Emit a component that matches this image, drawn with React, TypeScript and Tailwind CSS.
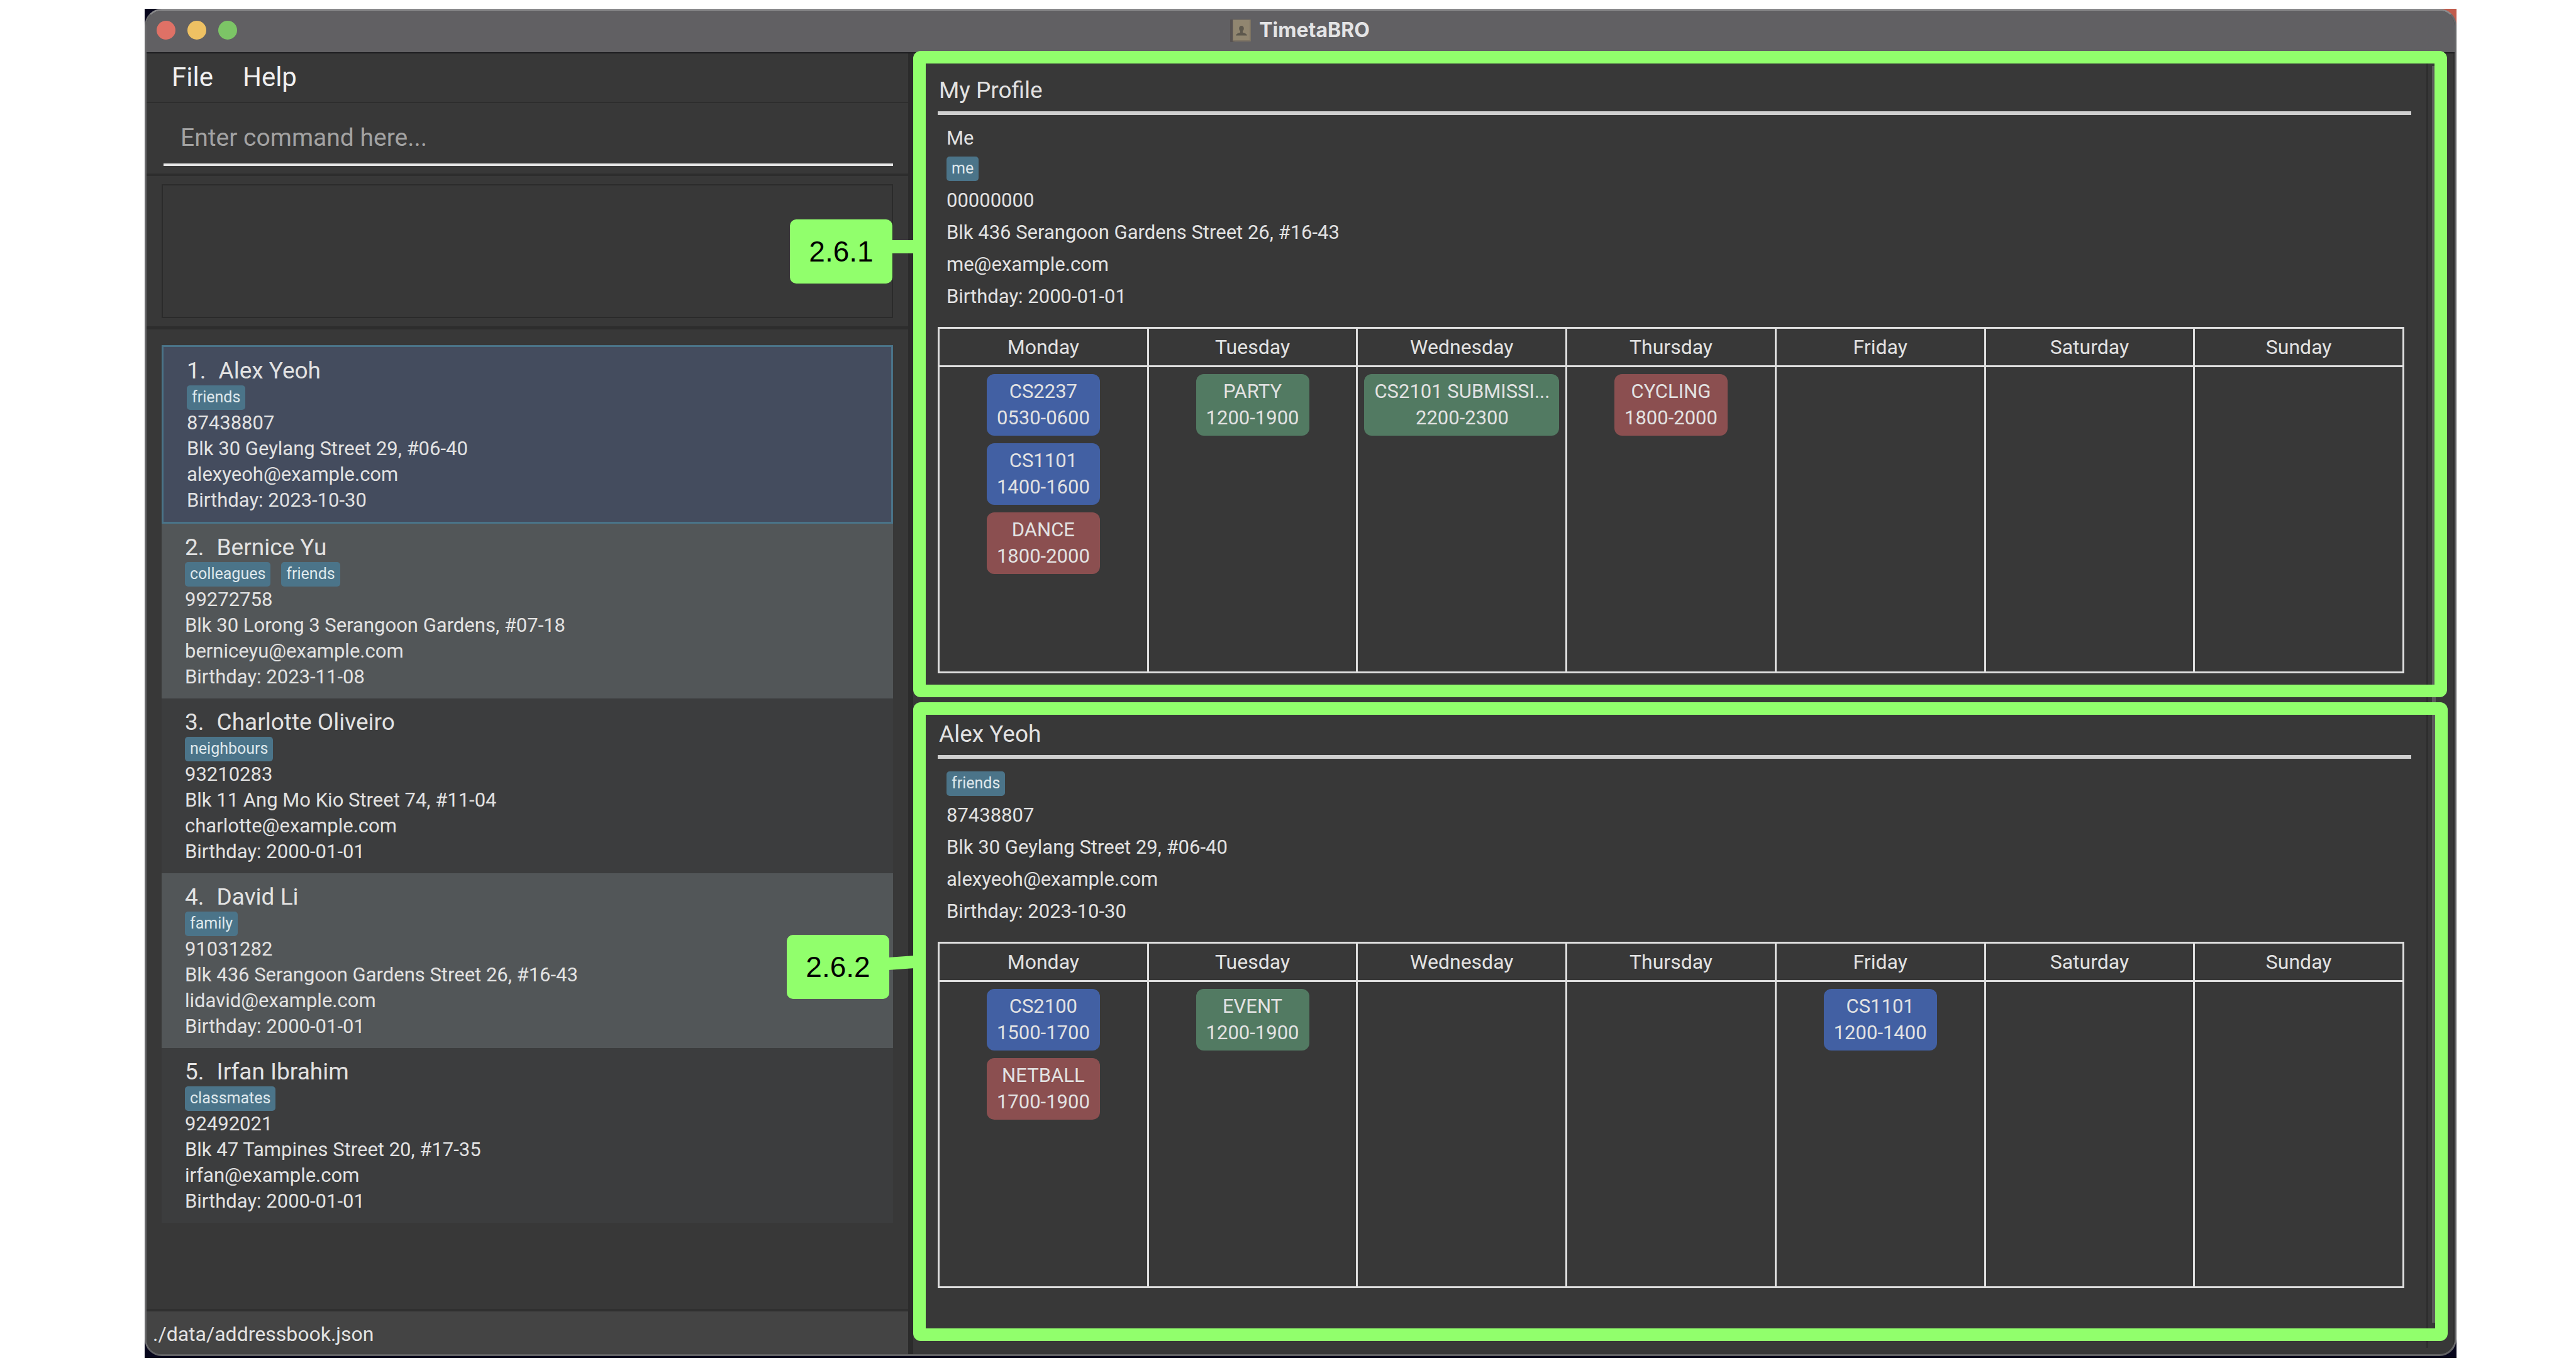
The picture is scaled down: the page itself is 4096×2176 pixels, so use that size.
type Person = {
  name: string;
  tags: string[];
  phone: string;
  address: string;
  email: string;
  birthday: string;
};

type Kind = "module" | "dated" | "cca";

type Slot = { label: string; time: string; kind: Kind; wide?: boolean };

const DAYS = ["Monday", "Tuesday", "Wednesday", "Thursday", "Friday", "Saturday", "Sunday"];

const PEOPLE: Person[] = [
  {
    name: "Alex Yeoh",
    tags: ["friends"],
    phone: "87438807",
    address: "Blk 30 Geylang Street 29, #06-40",
    email: "alexyeoh@example.com",
    birthday: "2023-10-30",
  },
  {
    name: "Bernice Yu",
    tags: ["colleagues", "friends"],
    phone: "99272758",
    address: "Blk 30 Lorong 3 Serangoon Gardens, #07-18",
    email: "berniceyu@example.com",
    birthday: "2023-11-08",
  },
  {
    name: "Charlotte Oliveiro",
    tags: ["neighbours"],
    phone: "93210283",
    address: "Blk 11 Ang Mo Kio Street 74, #11-04",
    email: "charlotte@example.com",
    birthday: "2000-01-01",
  },
  {
    name: "David Li",
    tags: ["family"],
    phone: "91031282",
    address: "Blk 436 Serangoon Gardens Street 26, #16-43",
    email: "lidavid@example.com",
    birthday: "2000-01-01",
  },
  {
    name: "Irfan Ibrahim",
    tags: ["classmates"],
    phone: "92492021",
    address: "Blk 47 Tampines Street 20, #17-35",
    email: "irfan@example.com",
    birthday: "2000-01-01",
  },
];

const ME: Person = {
  name: "Me",
  tags: ["me"],
  phone: "00000000",
  address: "Blk 436 Serangoon Gardens Street 26, #16-43",
  email: "me@example.com",
  birthday: "2000-01-01",
};

const MY_WEEK: Slot[][] = [
  [
    { label: "CS2237", time: "0530-0600", kind: "module" },
    { label: "CS1101", time: "1400-1600", kind: "module" },
    { label: "DANCE", time: "1800-2000", kind: "cca" },
  ],
  [{ label: "PARTY", time: "1200-1900", kind: "dated" }],
  [{ label: "CS2101 SUBMISSI...", time: "2200-2300", kind: "dated", wide: true }],
  [{ label: "CYCLING", time: "1800-2000", kind: "cca" }],
  [],
  [],
  [],
];

const ALEX_WEEK: Slot[][] = [
  [
    { label: "CS2100", time: "1500-1700", kind: "module" },
    { label: "NETBALL", time: "1700-1900", kind: "cca" },
  ],
  [{ label: "EVENT", time: "1200-1900", kind: "dated" }],
  [],
  [],
  [{ label: "CS1101", time: "1200-1400", kind: "module" }],
  [],
  [],
];

const KIND_COLOR: Record<Kind, string> = {
  module: "bg-[#4260a3]",
  dated: "bg-[#527a62]",
  cca: "bg-[#8b4f50]",
};

function Tag({ text }: { text: string }) {
  return (
    <span className="h-[39px] rounded-[5px] bg-[#4b7489] px-2 text-[25px] leading-[38px] text-[#dfe8ec]">
      {text}
    </span>
  );
}

function BookIcon() {
  return (
    <svg viewBox="0 0 33 37" className="h-[37px] w-[33px]" aria-hidden="true">
      <rect x="0" y="1" width="7" height="36" rx="1" fill="#575252" />
      <rect x="4" y="1" width="29" height="35" rx="1" fill="#7d7363" />
      <rect x="5" y="2" width="26" height="32" fill="#918670" />
      <path
        d="M18 11c2.400 0 3.800 1.800 3.800 4.200 0 1.800-.8 3.300-1.800 4.300v2.300c3 .9 6 1.700 7 4.700H9c1-3 4-3.800 7-4.700v-2.300c-1-1-1.800-2.500-1.800-4.300 0-2.400 1.400-4.200 3.800-4.200z"
        fill="#5d584d"
      />
    </svg>
  );
}

function TitleBar() {
  return (
    <header className="flex h-[68px] items-center border-b-2 border-[#1d1d20] bg-[#616063] pb-1">
      <div className="flex flex-1 gap-[19px] pl-4">
        <button aria-label="Close" className="size-[30px] rounded-full bg-[#df7166]" />
        <button aria-label="Minimise" className="size-[30px] rounded-full bg-[#eec163]" />
        <button aria-label="Zoom" className="size-[30px] rounded-full bg-[#7cc566]" />
      </div>
      <div className="flex items-center gap-[13px] pr-[18px]">
        <BookIcon />
        <h1 className="font-['Inter',sans-serif] text-[32px] leading-[38px] font-bold text-[#e4e4e5]">TimetaBRO</h1>
      </div>
      <div className="flex-1" />
    </header>
  );
}

function PersonCard({ person, index }: { person: Person; index: number }) {
  const tone =
    index === 0
      ? "border-[3px] border-[#4a7388] bg-[#444c5e]"
      : index % 2 === 1
        ? "bg-[#525658]"
        : "bg-[#3c3d3e]";
  return (
    <li className={`${tone} pt-[14px] pb-[14px] pl-[37px]`}>
      <h2 className="flex gap-5 text-[37px] leading-[47px]">
        <span>{index + 1}.</span>
        <span>{person.name}</span>
      </h2>
      <div className="flex gap-[17px]">
        {person.tags.map((t) => (
          <Tag key={t} text={t} />
        ))}
      </div>
      <div className="text-[31px] leading-[41px]">
        <p>{person.phone}</p>
        <p>{person.address}</p>
        <p>{person.email}</p>
        <p>Birthday: {person.birthday}</p>
      </div>
    </li>
  );
}

function LeftPane() {
  return (
    <div className="flex min-w-0 flex-col">
      <nav className="flex h-[79px] items-center gap-[47px] border-b-2 border-[#2d2d2d] pb-[2px] pl-10 text-[42px] leading-[50px] text-[#f0f0f0]">
        <button>File</button>
        <button>Help</button>
      </nav>
      <div className="border-b-4 border-[#2d2d2d] pt-[14px] pr-6 pb-3 pl-[27px]">
        <input
          type="text"
          aria-label="Command"
          placeholder="Enter command here..."
          className="block h-[86px] w-full border-b-4 border-[#e6e6e6] bg-transparent pl-[27px] text-[39px] text-white outline-none placeholder:text-[#a3a3a3]"
        />
      </div>
      <div className="border-b-[5px] border-[#2d2d2d] py-[13px] pr-6 pl-6">
        <textarea
          readOnly
          aria-label="Result"
          className="block h-[213px] w-full resize-none border-2 border-[#2b2b2b] bg-transparent outline-none"
        />
      </div>
      <ul className="grow pt-[25px] pr-6 pl-6">
        {PEOPLE.map((p, i) => (
          <PersonCard key={p.name} person={p} index={i} />
        ))}
      </ul>
      <footer className="flex h-[72px] items-center border-t-4 border-[#303030] bg-[#444444] pt-1 pl-[10px] text-[32px] leading-[40px]">
        ./data/addressbook.json
      </footer>
    </div>
  );
}

function Timetable({ week }: { week: Slot[][] }) {
  return (
    <div className="mt-[23px] pr-[11px]">
      <table className="w-full table-fixed border-collapse">
        <thead>
          <tr className="h-[61px]">
            {DAYS.map((d) => (
              <th key={d} className="border-[3px] border-[#dedede] p-0 text-[32px] leading-[40px] font-normal">
                {d}
              </th>
            ))}
          </tr>
        </thead>
        <tbody>
          <tr className="h-[487px]">
            {week.map((slots, i) => (
              <td key={DAYS[i]} className="border-[3px] border-[#dedede] px-[10px] pt-[11px] align-top">
                <div className="flex flex-col items-center gap-3">
                  {slots.map((s) => (
                    <div
                      key={s.label}
                      className={`${KIND_COLOR[s.kind]} ${s.wide ? "w-full" : ""} flex rounded-xl px-4 py-[7px] text-[31px] leading-[42px]`}
                    >
                      <p className="text-center whitespace-nowrap">
                        {s.label}
                        <br />
                        {s.time}
                      </p>
                    </div>
                  ))}
                </div>
              </td>
            ))}
          </tr>
        </tbody>
      </table>
    </div>
  );
}

function Profile({ title, person, week, showName }: { title: string; person: Person; week: Slot[][]; showName?: boolean }) {
  return (
    <div className="pt-[35px] pr-6 pl-[39px]">
      <h2 className="border-b-[6px] border-[#cfcfcf] pb-[9px] pl-[2px] text-[37px] leading-[48px]">{title}</h2>
      <div className="pt-[14px] pl-[14px] text-[31px] leading-[51px]">
        {showName && <p className="leading-[46px]">{person.name}</p>}
        <div className="mt-[6px] mb-[5px] flex">
          {person.tags.map((t) => (
            <Tag key={t} text={t} />
          ))}
        </div>
        <p>{person.phone}</p>
        <p>{person.address}</p>
        <p>{person.email}</p>
        <p>Birthday: {person.birthday}</p>
      </div>
      <Timetable week={week} />
    </div>
  );
}

const BADGE =
  "absolute flex h-[102px] w-[163px] items-center justify-center rounded-[10px] bg-[#91ff6c] font-['Liberation_Sans',Arial,sans-serif] text-[46px] leading-[52px] text-black";

export default function App() {
  return (
    <div className="flex min-h-screen bg-white pt-[14px] pr-[190px] pb-4 pl-[230px] font-['Roboto',sans-serif] text-[#e2e2e2]">
      <div className="relative flex min-w-0 grow bg-[#07061c] pb-[3px]">
        <div className="absolute top-0 right-0 size-7 bg-[#c05c4c]" />
        <div className="relative flex min-w-0 grow flex-col overflow-hidden rounded-[27px] border-[3px] border-t-[#8a8a8c] border-r-[#69696b] border-b-[#626264] border-l-[#69696b] bg-[#383838]">
          <TitleBar />
          <main className="grid grow grid-cols-[1211fr_8px_2451fr]">
            <LeftPane />
            <div className="bg-[#2b2b2b]" />
            <div className="flex min-w-0">
              <div className="flex min-w-0 grow flex-col">
                <section className="relative z-10 h-[1024px]">
                  <Profile title="My Profile" person={ME} week={MY_WEEK} showName />
                  <div className="pointer-events-none absolute -top-1 -right-[33px] bottom-0 left-0">
                    <div className="absolute inset-0 rounded-xl border-[20px] border-[#91ff6c]" />
                    <div className="absolute top-[301px] -left-[34px] h-[21px] w-[36px] bg-[#91ff6c]" />
                    <div className={`${BADGE} top-[268px] -left-[196px]`}>2.6.1</div>
                  </div>
                </section>
                <section className="relative z-10 grow">
                  <Profile title="Alex Yeoh" person={PEOPLE[0]} week={ALEX_WEEK} />
                  <div className="pointer-events-none absolute top-2 -right-[34px] bottom-[21px] left-0">
                    <div className="absolute inset-0 rounded-xl border-[20px] border-[#91ff6c]" />
                    <svg viewBox="0 0 42 24" className="absolute top-[402px] -left-[40px] h-6 w-[42px]" aria-hidden="true">
                      <polygon points="0,4 42,1 42,21 0,24" fill="#91ff6c" />
                    </svg>
                    <div className={`${BADGE} top-[370px] -left-[201px]`}>2.6.2</div>
                  </div>
                </section>
              </div>
              <div className="mb-[10px] flex w-[45px] shrink-0 border-r-2 border-l-[3px] border-[#2d2d2d] pl-[6px]">
                <div className="mt-5 mb-10 w-[6px] bg-[#5a5a5a]" />
              </div>
            </div>
          </main>
        </div>
      </div>
    </div>
  );
}
